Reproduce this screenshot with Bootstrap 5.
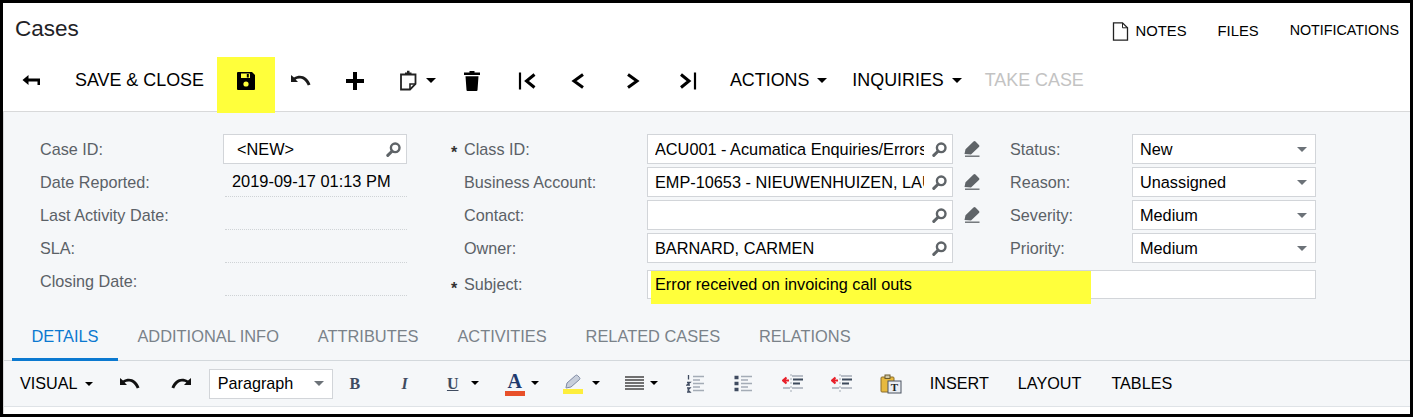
<!DOCTYPE html>
<html lang="en">
<head>
<meta charset="utf-8">
<title>Cases</title>
<link href="https://cdn.jsdelivr.net/npm/bootstrap@5.3.0/dist/css/bootstrap.min.css" rel="stylesheet">
<style>
html,body{height:417px;overflow:hidden}
body{background:#000;font-family:"Liberation Sans",Arial,sans-serif;font-size:16.2px;color:#000;padding:3px}
.frame{background:#fff;height:411px;overflow:hidden;display:flex;flex-direction:column}
.head-row{height:54px;padding:0 11px 0 12px}
.page-title{font-size:22.5px;font-weight:400;color:#1f2327;margin:0;position:relative;top:-2px}
.head-link{font-size:14.8px;margin-left:31px;position:relative;top:1px}
.head-long{font-size:14.3px}
.note-ico{width:17px;height:19px;margin-right:7px;position:relative;top:1px}
.tool-row{height:54px;padding-left:1px;position:relative;z-index:2;align-items:flex-start}
.tb{--bs-btn-padding-x:0;--bs-btn-padding-y:0;--bs-btn-border-width:0;--bs-btn-font-size:17.9px;--bs-btn-color:#000;--bs-btn-hover-color:#000;--bs-btn-disabled-color:#c3c3c3;--bs-btn-disabled-opacity:1;--bs-btn-border-radius:0;height:47px;white-space:nowrap;display:inline-flex;align-items:center;justify-content:center}
.tb svg{display:block}
.w54{width:54px}
.w53{width:53px}
.tb-save{width:58px;height:56px;background:#ffff3b;padding-bottom:9px}
.tb-save:hover{background:#ffff3b}
.tb-text{padding:0 13px 0 17px}
.tb-paste{width:63px;padding-left:18px;justify-content:flex-start}
.tb-paste.dropdown-toggle::after{margin-left:9px}
.tb-lbl{margin-right:25px}
.dropdown-toggle::after{margin-left:.44em}
.form-panel{background:#f5f7f9;border-top:1px solid #d8d9da;border-left:1px solid #d8d9da;flex:1;display:flex;flex-direction:column;min-height:0}
.field-grid{display:grid;grid-template-columns:183px 184px 44px 196px 306px 57px 122px 184px;grid-template-rows:33px 33px 33px 33px 33px;padding:22px 0 0 36px;height:214px}
.lbl{color:#5b6167;display:flex;align-items:center;height:30px;white-space:nowrap}
.lbl-mid{padding-left:13px;position:relative}
.req{position:absolute;left:0;top:7px;color:#333;font-size:16px;font-weight:700}
.inp{height:30px;background:#fff;border:1px solid #d2d5d9;display:flex;align-items:center;padding:0 5px 0 7px;position:relative}
.inp-new{padding-left:13px}
.inp-text{flex:1 1 0;min-width:0;overflow:hidden;white-space:nowrap;position:relative;z-index:1;font-size:16.3px}
.srch{width:15px;height:15px;flex:none;margin-left:8px}
.drop-tri{width:0;height:0;border-left:5.5px solid transparent;border-right:5.5px solid transparent;border-top:5px solid #6c7278;flex:none;margin-right:3px}
.ro{height:30px;border-bottom:1px dotted #cfd3d6;display:flex;align-items:center;padding-left:7px;margin-left:2px;white-space:nowrap;font-size:16.4px}
.pen{display:flex;align-items:center;height:30px;padding-left:11px}
.sub-lbl{margin-top:4px;height:29px}
.sub-inp{grid-column:5/9;margin-top:4px;height:29px}
.mark-hl{position:absolute;left:3px;top:0;width:440px;height:33px;background:#ffff3b}
.tab-row{height:37px;margin-left:8px;border:0}
.tab-row-wrap{border-bottom:1px solid #d3d8dc;height:47px;display:flex;align-items:flex-end}
.tab-lnk{padding:0 19.45px;height:37px;color:#7a8289;font-size:16.4px;display:flex;align-items:flex-start;padding-top:1px;white-space:nowrap}
.tab-lnk:hover{color:#7a8289}
.tab-lnk.on{color:#0b79d0;border-bottom:3px solid #0b79d0;height:38px;margin-bottom:-1px}
.ed-row{height:47px;border-bottom:1px solid #dfe3e7;padding-left:16px}
.eb{--bs-btn-padding-x:0;--bs-btn-padding-y:0;--bs-btn-border-width:0;--bs-btn-font-size:16.2px;--bs-btn-color:#000;--bs-btn-hover-color:#000;--bs-btn-border-radius:0;display:inline-flex;align-items:center;justify-content:center;height:45px;white-space:nowrap}
.para{width:124px;height:30px;background:#fff;border:1px solid #d2d5d9;display:flex;align-items:center;justify-content:space-between;padding:0 5px 0 8px}
.glyph{font-family:"Liberation Serif","Times New Roman",serif;font-weight:700;color:#3f4b60;font-size:16px;line-height:1}
.gb{--bs-btn-font-size:16.5px;--bs-btn-color:#3f4b60;width:12px}
.gu{text-decoration:underline}
.g-a{font-size:20px;color:#1f3a6e}
.tail{height:7px;flex:none}
</style>
</head>
<body>
<svg width="0" height="0" class="d-none">
<defs>
<symbol id="i-srch" viewBox="0 0 15 15"><circle cx="9.200" cy="5.800" r="4.300" fill="none" stroke="#5f6468" stroke-width="2.400"/><path d="M6 9.200 1.800 13.400" stroke="#5f6468" stroke-width="3" stroke-linecap="round"/></symbol>
<symbol id="i-pen" viewBox="0 0 16 16"><path d="M.5 13 1.500 8.300 9.500.6a1.400 1.400 0 0 1 2 0l3.400 3.300a1.400 1.400 0 0 1 0 2L7 13.500Z" fill="#5f6468"/><path d="M1 15.200H15.500" stroke="#5f6468" stroke-width="1.300"/></symbol>
</defs>
</svg>
<div class="frame">
  <div class="head-row d-flex align-items-center">
    <h1 class="page-title">Cases</h1>
    <div class="ms-auto d-flex align-items-center">
      <svg class="note-ico" viewBox="0 0 17 19"><path d="M1.500.8H10.500L15.500 5.800V18.200H1.500Z" fill="#fff" stroke="#222" stroke-width="1.300"/><path d="M10.500 1V5.800H15.500" fill="none" stroke="#222" stroke-width="1"/></svg>
      <span class="head-link" style="margin-left:0">NOTES</span>
      <span class="head-link">FILES</span>
      <span class="head-link head-long">NOTIFICATIONS</span>
    </div>
  </div>
  <div class="tool-row d-flex">
    <button class="btn tb w54" type="button" aria-label="Back"><svg width="20" height="14" viewBox="0 0 20 14"><path d="M7.500 1 1.500 6 7.500 11V7.400H16.500V11H19V4.600H7.500Z" fill="#000"/></svg></button>
    <button class="btn tb tb-text" type="button">SAVE &amp; CLOSE</button>
    <button class="btn tb tb-save" type="button" aria-label="Save"><svg width="18" height="18" viewBox="0 0 18 18"><path d="M1 0H15L18 3V17a1 1 0 0 1-1 1H1a1 1 0 0 1-1-1V1a1 1 0 0 1 1-1Z" fill="#000"/><rect x="4" y="1.500" width="9" height="4.500" fill="#ffff3b"/><rect x="9.800" y="2" width="2" height="3.500" fill="#000"/><circle cx="9" cy="12" r="2.600" fill="#ffff3b"/></svg></button>
    <button class="btn tb w53" type="button" aria-label="Undo"><svg width="20" height="13" viewBox="0 0 20 13"><path d="M0 1V8H7L4.600 5.600C7.800 3.400 13.500 3.800 16.800 11.500L19.500 10.500C16.500 2 9 -.5 3 3.600Z" fill="#1a1a1a"/></svg></button>
    <button class="btn tb w54" type="button" aria-label="Add"><svg width="18" height="18" viewBox="0 0 18 18"><path d="M7 0H11V7H18V11H11V18H7V11H0V7H7Z" fill="#000"/></svg></button>
    <button class="btn tb tb-paste dropdown-toggle" type="button" aria-label="Paste"><svg width="17" height="21" viewBox="0 0 17 21"><path d="M1 4.500H15.500V14L10 19.500H1Z" fill="none" stroke="#222" stroke-width="1.800"/><path d="M5 4.500V2.500H7V.8H9.500V2.500H11.500V4.500Z" fill="#222"/><path d="M10 19V14H15.500" fill="none" stroke="#222" stroke-width="1.600"/></svg></button>
    <button class="btn tb w54" type="button" aria-label="Delete"><svg width="16" height="20" viewBox="0 0 16 20"><path d="M5.500 0H10.500V1.600H16V4H0V1.600H5.500ZM1.500 5.200H14.500L13.500 19a1 1 0 0 1-1 1H3.500a1 1 0 0 1-1-1Z" fill="#000"/></svg></button>
    <button class="btn tb w54" type="button" aria-label="First"><svg width="20" height="18" viewBox="0 0 20 18"><path d="M4 .5V17.500" stroke="#000" stroke-width="2.200"/><path d="M18.500 2.500 10.500 9 18.500 15.500" fill="none" stroke="#000" stroke-width="3"/></svg></button>
    <button class="btn tb w54" type="button" aria-label="Previous"><svg width="20" height="18" viewBox="0 0 20 18"><path d="M13 2.500 4 9 13 15.500" fill="none" stroke="#000" stroke-width="3"/></svg></button>
    <button class="btn tb w54" type="button" aria-label="Next"><svg width="20" height="18" viewBox="0 0 20 18"><path d="M4 2.500 13 9 4 15.500" fill="none" stroke="#000" stroke-width="3"/></svg></button>
    <button class="btn tb w54" type="button" aria-label="Last"><svg width="20" height="18" viewBox="0 0 20 18"><path d="M3 2.500 11 9 3 15.500" fill="none" stroke="#000" stroke-width="3"/><path d="M17 .5V17.500" stroke="#000" stroke-width="2.200"/></svg></button>
    <button class="btn tb tb-lbl dropdown-toggle" style="margin-left:15px" type="button">ACTIONS</button>
    <button class="btn tb tb-lbl dropdown-toggle" style="margin-right:23px" type="button">INQUIRIES</button>
    <button class="btn tb tb-lbl" type="button" disabled>TAKE CASE</button>
  </div>
  <div class="form-panel">
    <div class="field-grid">
      <div class="lbl">Case ID:</div>
      <div class="inp inp-new"><div class="inp-text">&lt;NEW&gt;</div><svg class="srch"><use href="#i-srch"/></svg></div>
      <div></div>
      <div class="lbl lbl-mid"><span class="req">*</span>Class ID:</div>
      <div class="inp"><div class="inp-text">ACU001 - Acumatica Enquiries/Errors</div><svg class="srch"><use href="#i-srch"/></svg></div>
      <div class="pen"><svg width="16" height="16"><use href="#i-pen"/></svg></div>
      <div class="lbl">Status:</div>
      <div class="inp"><div class="inp-text">New</div><span class="drop-tri"></span></div>

      <div class="lbl">Date Reported:</div>
      <div class="ro">2019-09-17 01:13 PM</div>
      <div></div>
      <div class="lbl lbl-mid">Business Account:</div>
      <div class="inp"><div class="inp-text">EMP-10653 - NIEUWENHUIZEN, LAURA</div><svg class="srch"><use href="#i-srch"/></svg></div>
      <div class="pen"><svg width="16" height="16"><use href="#i-pen"/></svg></div>
      <div class="lbl">Reason:</div>
      <div class="inp"><div class="inp-text">Unassigned</div><span class="drop-tri"></span></div>

      <div class="lbl">Last Activity Date:</div>
      <div class="ro"></div>
      <div></div>
      <div class="lbl lbl-mid">Contact:</div>
      <div class="inp"><div class="inp-text"></div><svg class="srch"><use href="#i-srch"/></svg></div>
      <div class="pen"><svg width="16" height="16"><use href="#i-pen"/></svg></div>
      <div class="lbl">Severity:</div>
      <div class="inp"><div class="inp-text">Medium</div><span class="drop-tri"></span></div>

      <div class="lbl">SLA:</div>
      <div class="ro"></div>
      <div></div>
      <div class="lbl lbl-mid">Owner:</div>
      <div class="inp"><div class="inp-text">BARNARD, CARMEN</div><svg class="srch"><use href="#i-srch"/></svg></div>
      <div></div>
      <div class="lbl">Priority:</div>
      <div class="inp"><div class="inp-text">Medium</div><span class="drop-tri"></span></div>

      <div class="lbl">Closing Date:</div>
      <div class="ro"></div>
      <div></div>
      <div class="lbl lbl-mid sub-lbl"><span class="req">*</span>Subject:</div>
      <div class="inp sub-inp"><span class="mark-hl"></span><div class="inp-text">Error received on invoicing call outs</div></div>
    </div>
    <div class="tab-row-wrap">
      <nav class="nav tab-row">
        <a class="nav-link tab-lnk on" href="#">DETAILS</a>
        <a class="nav-link tab-lnk" href="#">ADDITIONAL INFO</a>
        <a class="nav-link tab-lnk" href="#">ATTRIBUTES</a>
        <a class="nav-link tab-lnk" href="#">ACTIVITIES</a>
        <a class="nav-link tab-lnk" href="#">RELATED CASES</a>
        <a class="nav-link tab-lnk" href="#">RELATIONS</a>
      </nav>
    </div>
    <div class="ed-row d-flex align-items-center">
      <button class="btn eb dropdown-toggle" type="button">VISUAL</button>
      <button class="btn eb" style="margin-left:27px" type="button" aria-label="Undo"><svg width="20" height="13" viewBox="0 0 20 13"><path d="M0 1V8H7L4.600 5.600C7.800 3.400 13.500 3.800 16.800 11.500L19.500 10.500C16.500 2 9 -.5 3 3.600Z" fill="#111"/></svg></button>
      <button class="btn eb" style="margin-left:31px" type="button" aria-label="Redo"><svg width="20" height="13" viewBox="0 0 20 13"><path d="M20 1V8H13L15.400 5.600C12.200 3.400 6.500 3.800 3.200 11.500L.5 10.500C3.500 2 11 -.5 17 3.600Z" fill="#111"/></svg></button>
      <div class="para" style="margin-left:18px"><span>Paragraph</span><span class="drop-tri"></span></div>
      <button class="btn eb glyph gb" style="margin-left:16px" type="button">B</button>
      <button class="btn eb glyph gb fst-italic" style="margin-left:38px" type="button">I</button>
      <button class="btn eb glyph gb gu" style="margin-left:36px" type="button">U</button>
      <span class="dropdown-toggle" style="margin-left:12px"></span>
      <span class="d-inline-flex flex-column align-items-center" style="margin-left:26px;width:20px"><span class="glyph g-a">A</span><svg width="20" height="5" class="d-block"><rect width="20" height="5" fill="#e8502a"/></svg></span>
      <span class="dropdown-toggle" style="margin-left:6px"></span>
      <svg width="20" height="20" viewBox="0 0 20 20" style="margin-left:24px"><rect y="15" width="20" height="5" fill="#fdee3d"/><path d="M3 13.500 4 9 12.500 1.500a1.500 1.500 0 0 1 2 0L16.500 3.500a1.500 1.500 0 0 1 0 2L8 13 3 14Z" fill="#c7cedb" stroke="#7f8aa3"/></svg>
      <span class="dropdown-toggle" style="margin-left:9px"></span>
      <svg width="19" height="15" viewBox="0 0 19 15" style="margin-left:25px"><path d="M0 1H19M0 4H19M0 7H19M0 10H19M0 13H19" stroke="#444" stroke-width="1.500"/></svg>
      <span class="dropdown-toggle" style="margin-left:6px"></span>
      <svg width="19" height="20" viewBox="0 0 19 20" style="margin-left:28px"><path d="M7 2.500H18M7 6H14M7 9.500H18M7 13H14M7 16.500H18" stroke="#a4acb6" stroke-width="1.500"/><path d="M2.500 1V5.500M1 8.500H4L1 11H4M1 14H4L2 16 4 18H1" fill="none" stroke="#3f4b60" stroke-width="1.300"/></svg>
      <svg width="19" height="20" viewBox="0 0 19 20" style="margin-left:29px"><path d="M7 2.500H18M7 6H14M7 9.500H18M7 13H14M7 16.500H18" stroke="#a4acb6" stroke-width="1.500"/><path d="M.5 3.500H4.500M.5 9.500H4.500M.5 15.500H4.500" stroke="#3f4b60" stroke-width="3.500"/></svg>
      <svg width="22" height="22" viewBox="0 0 22 22" style="margin-left:29px"><path d="M9 1V21" stroke="#a4acb6" stroke-dasharray="2 2"/><path d="M1 7.500H7M4.500 4.500 1 7.500 4.500 10.500" fill="none" stroke="#e8202a" stroke-width="2.200"/><path d="M10 3H21M10 15H21M1 15H8" stroke="#a4acb6" stroke-width="1.500"/><path d="M11 6.500H21M11 10.500H18" stroke="#3d4a5c" stroke-width="2"/></svg>
      <svg width="22" height="22" viewBox="0 0 22 22" style="margin-left:27px"><path d="M9 1V21" stroke="#a4acb6" stroke-dasharray="2 2"/><path d="M1 7.500H7M4.500 4.500 1 7.500 4.500 10.500" fill="none" stroke="#e8202a" stroke-width="2.200"/><path d="M10 3H21M10 15H21M1 15H8" stroke="#a4acb6" stroke-width="1.500"/><path d="M11 6.500H21M11 10.500H18" stroke="#3d4a5c" stroke-width="2"/></svg>
      <svg width="22" height="20" viewBox="0 0 22 20" style="margin-left:27px"><rect x="1" y="3" width="13" height="15" rx="1" fill="#e7b93f" stroke="#8a6d2a"/><rect x="5" y="1" width="5" height="3.500" fill="#cfc7a8" stroke="#6b5a2a"/><rect x="8" y="7" width="13" height="12" fill="#e9edf2" stroke="#4a5260"/><text x="14.500" y="17" text-anchor="middle" font-family="Liberation Serif,serif" font-weight="700" font-size="11" fill="#222">T</text></svg>
      <button class="btn eb" style="margin-left:28px" type="button">INSERT</button>
      <button class="btn eb" style="margin-left:29px" type="button">LAYOUT</button>
      <button class="btn eb" style="margin-left:30px" type="button">TABLES</button>
    </div>
    <div class="tail bg-white"></div>
  </div>
</div>
<script src="https://cdn.jsdelivr.net/npm/bootstrap@5.3.0/dist/js/bootstrap.bundle.min.js"></script>
</body>
</html>
